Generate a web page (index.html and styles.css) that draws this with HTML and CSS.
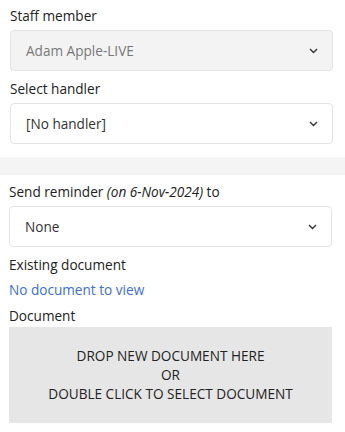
FILE: index.html
```html
<!DOCTYPE html>
<html lang="en">

<head>
  <meta charset="UTF-8">
  <meta name="viewport" content="width=device-width, initial-scale=1.0">
  <title>Reminder</title>
  <link rel="stylesheet" href="styles.css">
</head>

<body>
  <div class="section top">
    <label class="field-label">Staff member</label>
    <div class="select-box disabled">
      <span>Adam Apple-LIVE</span>
      <svg class="chevron" width="9" height="6" viewBox="0 0 9 6"><path d="M1 1l3.5 3.5L8 1" fill="none" stroke="#333" stroke-width="1.4"/></svg>
    </div>

    <label class="field-label spaced">Select handler</label>
    <div class="select-box">
      <span>[No handler]</span>
      <svg class="chevron" width="9" height="6" viewBox="0 0 9 6"><path d="M1 1l3.5 3.5L8 1" fill="none" stroke="#333" stroke-width="1.4"/></svg>
    </div>
  </div>

  <div class="divider"></div>

  <div class="section bottom">
    <label class="field-label">Send reminder <em>(on 6-Nov-2024)</em> to</label>
    <div class="select-box">
      <span>None</span>
      <svg class="chevron" width="9" height="6" viewBox="0 0 9 6"><path d="M1 1l3.5 3.5L8 1" fill="none" stroke="#333" stroke-width="1.4"/></svg>
    </div>

    <label class="field-label spaced">Existing document</label>
    <a class="doc-link" href="#">No document to view</a>

    <label class="field-label doc-label">Document</label>
    <div class="drop-zone">
      DROP NEW DOCUMENT HERE<br>
      OR<br>
      DOUBLE CLICK TO SELECT DOCUMENT
    </div>
  </div>
</body>

</html>
```

FILE: styles.css
```css
body {
  margin: 0;
  font-family: "Open Sans", "Noto Sans", sans-serif;
  font-size: 13.6px;
  color: #222;
  background: #fff;
}

.section {
  display: flex;
  flex-direction: column;
}

.section.top {
  padding: 6px 12px 13px 10px;
}

.section.bottom {
  padding: 7px 13px 0 9px;
}

.field-label {
  display: block;
  line-height: 20px;
  margin-bottom: 4px;
}

.field-label.spaced {
  margin-top: 8px;
}

.field-label em {
  font-style: italic;
}

.select-box {
  display: flex;
  align-items: center;
  justify-content: space-between;
  height: 39px;
  padding: 0 14px 0 15px;
  border: 1px solid #e4e4e4;
  border-radius: 4px;
  background: #fff;
  color: #333;
}

.select-box.disabled {
  background: #f3f3f3;
  color: #777;
}

.chevron {
  display: block;
}

.divider {
  height: 18px;
  background: #f4f4f4;
}

.doc-link {
  display: block;
  line-height: 20px;
  margin-top: 1px;
  color: #3b6fd4;
  text-decoration: none;
}

.doc-label {
  margin-top: 6px;
  margin-bottom: 1px;
}

.drop-zone {
  height: 96px;
  box-sizing: border-box;
  padding-top: 19px;
  background: #e6e6e6;
  text-align: center;
  line-height: 19px;
  color: #222;
}
```
